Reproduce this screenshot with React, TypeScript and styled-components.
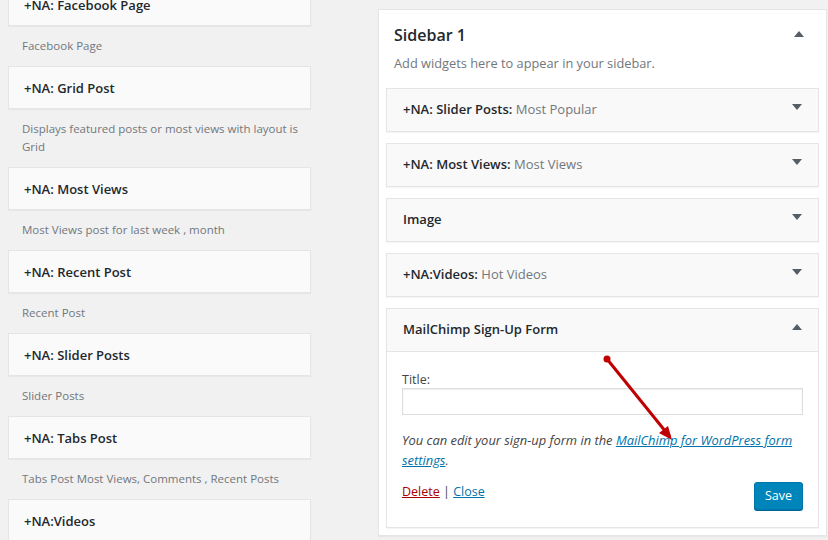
import React from "react";
import styled, { createGlobalStyle } from "styled-components";

const Global = createGlobalStyle`
  html, body { margin: 0; padding: 0; background: #f1f1f1; overflow: hidden; }
  body { font-family: "Open Sans", "Noto Sans", sans-serif; color: #444; }
  * { box-sizing: border-box; }
`;

const Page = styled.div`
  width: 828px;
  height: 540px;
  display: flex;
  align-items: flex-start;
  position: relative;
  overflow: hidden;
`;

const Available = styled.div`
  width: 303px;
  margin-left: 8px;
  margin-top: -17px;
  display: flex;
  flex-direction: column;
`;

const AvailCard = styled.div`
  height: 43px;
  background: #fafafa;
  border: 1px solid #e5e5e5;
  box-shadow: 0 1px 1px rgba(0, 0, 0, 0.04);
  display: flex;
  align-items: center;
  padding-left: 15px;
  font-size: 13px;
  font-weight: 600;
  color: #23282d;
`;

const AvailDesc = styled.div`
  padding: 11px 6px 11px 14px;
  font-size: 11.5px;
  line-height: 18px;
  color: #72777c;
`;

const SidebarBox = styled.div`
  margin-left: 67px;
  margin-top: 9px;
  width: 449px;
  height: 527px;
  background: #fff;
  border: 1px solid #e5e5e5;
  box-shadow: 0 1px 1px rgba(0, 0, 0, 0.04);
  padding: 0 7px 10px 7px;
  display: flex;
  flex-direction: column;
`;

const SidebarHead = styled.div`
  display: flex;
  justify-content: space-between;
  align-items: flex-start;
  padding: 12px 15px 0 8px;
`;

const SidebarTitle = styled.h2`
  margin: 0;
  font-size: 16px;
  line-height: 26px;
  font-weight: 600;
  color: #23282d;
`;

const SidebarDesc = styled.p`
  margin: 6px 0 16px 8px;
  font-size: 12.8px;
  line-height: 18px;
  color: #72777c;
`;

const Widget = styled.div`
  border: 1px solid #e5e5e5;
  background: #fff;
  box-shadow: 0 1px 1px rgba(0, 0, 0, 0.04);
  margin-bottom: 11px;
`;

const WidgetTop = styled.div<{ $open?: boolean }>`
  height: ${(p) => (p.$open ? 43 : 42)}px;
  background: #f9f9f9;
  display: flex;
  align-items: center;
  justify-content: space-between;
  padding: 0 16px 2px 16px;
  border-bottom: ${(p) => (p.$open ? "1px solid #e5e5e5" : "none")};
`;

const WidgetTitle = styled.span`
  font-size: 13px;
  font-weight: 600;
  color: #23282d;
`;

const InTitle = styled.span`
  font-weight: 400;
  color: #72777c;
`;

const Arrow = styled.span<{ $up?: boolean }>`
  width: 0;
  height: 0;
  border-left: 5px solid transparent;
  border-right: 5px solid transparent;
  ${(p) =>
    p.$up
      ? "border-bottom: 6px solid #555d66;"
      : "border-top: 6px solid #555d66;"}
  margin-top: -4px;
`;

const WidgetBody = styled.div`
  padding: 19px 15px 17px 15px;
  position: relative;
`;

const Label = styled.label`
  display: block;
  font-size: 12.5px;
  line-height: 17px;
  color: #444;
`;

const Input = styled.input`
  display: block;
  width: 100%;
  height: 27px;
  margin: 0 0 15px 0;
  border: 1px solid #ddd;
  box-shadow: inset 0 1px 2px rgba(0, 0, 0, 0.07);
  background: #fff;
  font: inherit;
`;

const Note = styled.p`
  margin: 0;
  font-size: 12.9px;
  line-height: 20px;
  font-style: italic;
  color: #444;
`;

const Link = styled.a<{ $danger?: boolean }>`
  color: ${(p) => (p.$danger ? "#a00" : "#0073aa")};
  text-decoration: underline;
`;

const Actions = styled.div`
  display: flex;
  justify-content: space-between;
  align-items: flex-start;
  margin-top: 12px;
`;

const ActionLinks = styled.div`
  font-size: 12.5px;
  line-height: 20px;
  color: #444;
`;

const SaveButton = styled.button`
  height: 28px;
  width: 49px;
  padding: 0 0 1px;
  margin: 0;
  background: #0085ba;
  border: 1px solid #0073aa;
  border-radius: 3px;
  box-shadow: 0 1px 0 #006799;
  color: #fff;
  font-family: inherit;
  font-size: 12.5px;
`;

const Pointer = styled.svg`
  position: absolute;
  left: 0;
  top: 0;
  pointer-events: none;
`;

const available = [
  { title: "+NA: Facebook Page", desc: "Facebook Page" },
  { title: "+NA: Grid Post", desc: "Displays featured posts or most views with layout is Grid" },
  { title: "+NA: Most Views", desc: "Most Views post for last week , month" },
  { title: "+NA: Recent Post", desc: "Recent Post" },
  { title: "+NA: Slider Posts", desc: "Slider Posts" },
  { title: "+NA: Tabs Post", desc: "Tabs Post Most Views, Comments , Recent Posts" },
  { title: "+NA:Videos", desc: "" },
];

const placed = [
  { title: "+NA: Slider Posts:", sub: "Most Popular" },
  { title: "+NA: Most Views:", sub: "Most Views" },
  { title: "Image", sub: "" },
  { title: "+NA:Videos:", sub: "Hot Videos" },
];

export default function App() {
  return (
    <Page>
      <Global />
      <Available>
        {available.map((w) => (
          <React.Fragment key={w.title}>
            <AvailCard>{w.title}</AvailCard>
            {w.desc && <AvailDesc>{w.desc}</AvailDesc>}
          </React.Fragment>
        ))}
      </Available>
      <SidebarBox>
        <SidebarHead>
          <SidebarTitle>Sidebar 1</SidebarTitle>
          <Arrow $up style={{ marginTop: 9 }} />
        </SidebarHead>
        <SidebarDesc>Add widgets here to appear in your sidebar.</SidebarDesc>
        {placed.map((w) => (
          <Widget key={w.title}>
            <WidgetTop>
              <WidgetTitle>
                {w.title} {w.sub && <InTitle>{w.sub}</InTitle>}
              </WidgetTitle>
              <Arrow />
            </WidgetTop>
          </Widget>
        ))}
        <Widget>
          <WidgetTop $open>
            <WidgetTitle>MailChimp Sign-Up Form</WidgetTitle>
            <Arrow $up />
          </WidgetTop>
          <WidgetBody>
            <Label>Title:</Label>
            <Input type="text" />
            <Note>
              You can edit your sign-up form in the{" "}
              <Link>MailChimp for WordPress form settings</Link>.
            </Note>
            <Actions>
              <ActionLinks>
                <Link $danger>Delete</Link> | <Link>Close</Link>
              </ActionLinks>
              <SaveButton>Save</SaveButton>
            </Actions>
          </WidgetBody>
        </Widget>
      </SidebarBox>
      <Pointer width="828" height="540" viewBox="0 0 828 540">
        <circle cx="607" cy="359" r="3.5" fill="#c00000" />
        <line x1="607" y1="359" x2="670" y2="437" stroke="#c00000" strokeWidth="3" />
        <polygon points="672,440 659,433 668,426" fill="#c00000" />
      </Pointer>
    </Page>
  );
}
